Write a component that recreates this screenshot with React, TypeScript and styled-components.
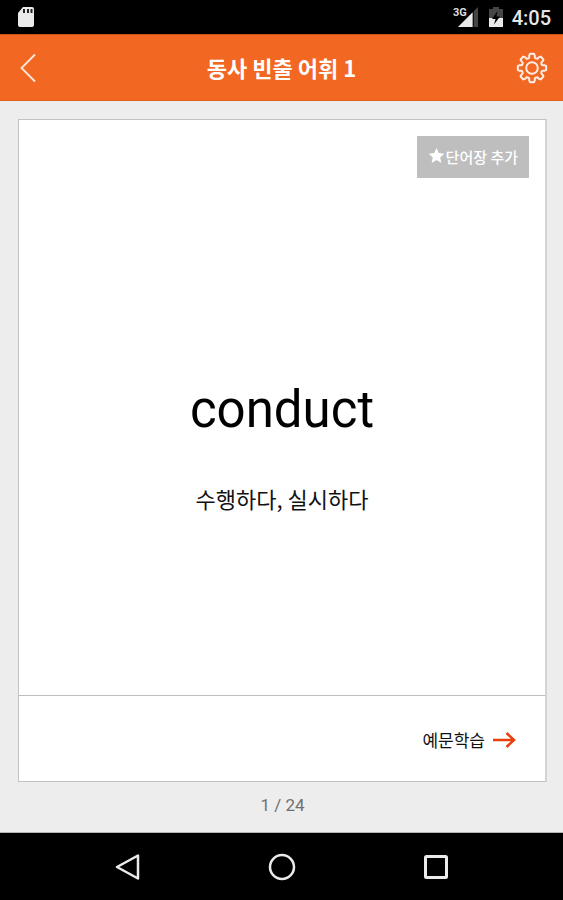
import React from "react";
import styled, { createGlobalStyle } from "styled-components";

const GlobalStyle = createGlobalStyle`
  *, *::before, *::after { box-sizing: border-box; }
  body {
    margin: 0;
    background: #ededed;
    font-family: Roboto, "Noto Sans CJK KR", sans-serif;
  }
  button { font: inherit; border: 0; padding: 0; background: none; cursor: pointer; }
`;

const Screen = styled.div`
  display: flex;
  flex-direction: column;
  min-height: 100vh;
`;

const StatusBar = styled.div`
  display: flex;
  align-items: center;
  justify-content: space-between;
  height: 34px;
  padding: 0 12px 0 16px;
  background: #000;
`;

const StatusGroup = styled.div`
  display: flex;
  align-items: center;
  gap: 8px;
`;

const Clock = styled.time`
  padding-top: 2px;
  color: #e6e6e6;
  font-size: 20px;
  line-height: 32px;
  font-weight: 500;
`;

const Header = styled.header`
  display: grid;
  grid-template-columns: 56px 1fr 56px;
  align-items: center;
  height: 67px;
  background: #f26722;
  border-top: 1px solid #c9541b;
  border-bottom: 1px solid #e25f1c;
`;

const Title = styled.h1`
  margin: 0;
  padding-bottom: 2px;
  color: #fff;
  font-family: "Noto Sans CJK KR", sans-serif;
  font-size: 22px;
  line-height: 32px;
  font-weight: 700;
  text-align: center;
`;

const IconButton = styled.button<{ $align: "left" | "right" }>`
  display: flex;
  align-items: center;
  justify-content: ${(p) => (p.$align === "left" ? "flex-start" : "flex-end")};
  height: 64px;
  padding: ${(p) => (p.$align === "left" ? "0 18px" : "0 15px 0 0")};
`;

const Main = styled.main`
  display: flex;
  flex: 1;
  flex-direction: column;
  padding: 18px 16px 0 18px;
  background: #ededed;
  border-bottom: 1px solid #b4b4b4;
`;

const Card = styled.article`
  display: flex;
  flex: 1;
  flex-direction: column;
  background: #fff;
  border: 1px solid #c2c2c2;
  border-right: 2px solid #d4d4d4;
`;

const CardTop = styled.div`
  display: flex;
  justify-content: flex-end;
  padding: 16px 16px 0;
`;

const AddButton = styled.button`
  && {
    display: flex;
    align-items: center;
    gap: 1px;
    height: 42px;
    padding: 0 11px;
    background: #bebebe;
    color: #fff;
    font-family: "Noto Sans CJK KR", sans-serif;
    font-size: 15px;
    line-height: 24px;
    font-weight: 500;
  }
`;

const WordArea = styled.div`
  display: flex;
  flex: 1;
  flex-direction: column;
  align-items: center;
  justify-content: center;
  gap: 42px;
  padding-top: 21px;
`;

const Word = styled.h2`
  margin: 0;
  color: #000;
  font-size: 51px;
  line-height: 60px;
  font-weight: 400;
`;

const Meaning = styled.p`
  margin: 0;
  color: #111;
  font-family: "Noto Sans CJK KR", sans-serif;
  font-size: 22px;
  line-height: 32px;
`;

const CardFooter = styled.div`
  display: flex;
  align-items: center;
  justify-content: flex-end;
  height: 86px;
  padding: 3px 29px 0;
  border-top: 1px solid #bdbdbd;
`;

const ExampleButton = styled.button`
  && {
    display: flex;
    align-items: center;
    gap: 7px;
    color: #111;
    font-family: "Noto Sans CJK KR", sans-serif;
    font-size: 17px;
    line-height: 24px;
  }
`;

const Counter = styled.p`
  margin: 0;
  padding: 11px 0 15px;
  color: #707070;
  font-size: 17px;
  line-height: 24px;
  text-align: center;
`;

const NavBar = styled.nav`
  display: flex;
  justify-content: center;
  gap: 98px;
  height: 67px;
  background: #000;
`;

const NavButton = styled.button`
  display: flex;
  align-items: center;
  justify-content: center;
  width: 56px;
`;

const gearPath = (() => {
  const points: string[] = [];
  const profile: [number, number][] = [
    [-15, 10.8],
    [-12, 13],
    [-8, 14.3],
    [8, 14.3],
    [12, 13],
    [15, 10.8],
    [22.5, 10.2],
  ];
  for (let tooth = 0; tooth < 8; tooth += 1) {
    profile.forEach(([offset, radius]) => {
      const a = ((tooth * 45 + offset - 90) * Math.PI) / 180;
      points.push(`${(16 + radius * Math.cos(a)).toFixed(2)} ${(16 + radius * Math.sin(a)).toFixed(2)}`);
    });
  }
  return `M${points.join("L")}Z`;
})();

const SdCardIcon = () => (
  <svg width="20" height="22" viewBox="0 0 20 22" aria-hidden="true">
    <path d="M7 1h9q2 0 2 2v16q0 2-2 2H4q-2 0-2-2V7Z" fill="#ebebeb" />
    <path d="M8 3v4M12 3v4M15.500 3v4" stroke="#222" strokeWidth="2" />
  </svg>
);

const SignalIcon = () => (
  <svg width="27" height="24" viewBox="0 0 27 24" aria-label="3G">
    <path d="M25 2V22H5Z" fill="#444" />
    <path d="M19.500 7.500V22H5Z" fill="#ebebeb" />
    <path d="M20.500 6V22" stroke="#111" strokeWidth="1" />
    <text x="0" y="11" fill="#ddd" stroke="#000" strokeWidth="2" paintOrder="stroke" fontFamily="Roboto, sans-serif" fontSize="11" fontWeight="700">3G</text>
  </svg>
);

const BatteryIcon = () => (
  <svg width="16" height="22" viewBox="0 0 16 22" aria-hidden="true">
    <path d="M5 1h6v2h4v9H1V3h4Z" fill="#464646" />
    <path d="M1 12h14v9H1Z" fill="#ebebeb" />
    <path d="M9.500 5L4 13h3.500L6 18.500 12 10.500H8.500Z" fill="#000" />
  </svg>
);

const BackChevron = () => (
  <svg width="20" height="30" viewBox="0 0 20 30" fill="none" aria-hidden="true">
    <path d="M17 1.500L3.500 15 17 28.500" stroke="#ffe9dc" strokeWidth="1.800" />
  </svg>
);

const GearIcon = () => (
  <svg width="32" height="32" viewBox="0 0 32 32" fill="none" stroke="#ffeee5" strokeWidth="2" strokeLinejoin="round" aria-hidden="true">
    <path d={gearPath} />
    <circle cx="16" cy="16" r="5.800" />
  </svg>
);

const StarIcon = () => (
  <svg width="17" height="18" viewBox="0 0 17 18" aria-hidden="true">
    <path d="M8.500 0l2.300 5.100 5.500.6-4.100 3.700 1.200 5.500-4.900-2.800-4.900 2.800 1.200-5.500L.7 5.700l5.500-.6Z" fill="#fff" />
  </svg>
);

const ArrowIcon = () => (
  <svg width="24" height="18" viewBox="0 0 24 18" fill="none" aria-hidden="true">
    <path d="M1 9h20M14.500 2l7.500 7-7.500 7" stroke="#e8400c" strokeWidth="2.500" />
  </svg>
);

export default function App() {
  return (
    <Screen>
      <GlobalStyle />
      <StatusBar>
        <SdCardIcon />
        <StatusGroup>
          <SignalIcon />
          <BatteryIcon />
          <Clock>4:05</Clock>
        </StatusGroup>
      </StatusBar>
      <Header>
        <IconButton type="button" $align="left" aria-label="뒤로">
          <BackChevron />
        </IconButton>
        <Title>동사 빈출 어휘 1</Title>
        <IconButton type="button" $align="right" aria-label="설정">
          <GearIcon />
        </IconButton>
      </Header>
      <Main>
        <Card>
          <CardTop>
            <AddButton type="button">
              <StarIcon />
              단어장 추가
            </AddButton>
          </CardTop>
          <WordArea>
            <Word>conduct</Word>
            <Meaning>수행하다, 실시하다</Meaning>
          </WordArea>
          <CardFooter>
            <ExampleButton type="button">
              예문학습
              <ArrowIcon />
            </ExampleButton>
          </CardFooter>
        </Card>
        <Counter>1 / 24</Counter>
      </Main>
      <NavBar>
        <NavButton type="button" aria-label="뒤로 가기">
          <svg width="28" height="28" viewBox="0 0 28 28" fill="none" aria-hidden="true">
            <path d="M24 2.500v23L3 14Z" stroke="#ebebeb" strokeWidth="2.500" strokeLinejoin="round" />
          </svg>
        </NavButton>
        <NavButton type="button" aria-label="홈">
          <svg width="28" height="28" viewBox="0 0 28 28" fill="none" aria-hidden="true">
            <circle cx="14" cy="14" r="12" stroke="#ebebeb" strokeWidth="2.500" />
          </svg>
        </NavButton>
        <NavButton type="button" aria-label="최근 앱">
          <svg width="28" height="28" viewBox="0 0 28 28" fill="none" aria-hidden="true">
            <rect x="3.500" y="3.500" width="21" height="21" rx="1" stroke="#ebebeb" strokeWidth="3" />
          </svg>
        </NavButton>
      </NavBar>
    </Screen>
  );
}
